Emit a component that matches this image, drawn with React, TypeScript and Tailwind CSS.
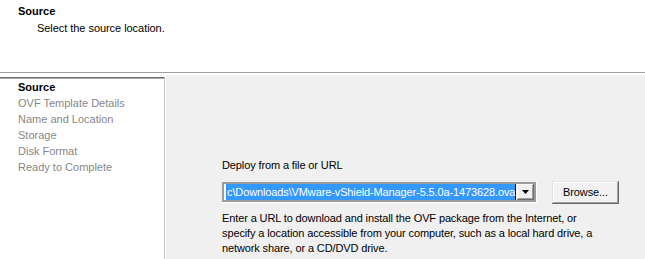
export default function App() {
  const steps = ["OVF Template Details", "Name and Location", "Storage", "Disk Format", "Ready to Complete"]

  return (
    <div className="w-[645px] h-[259px] overflow-hidden flex flex-col bg-white text-[11px] text-black font-['Liberation_Sans',Arial,sans-serif]">
      {/* Header */}
      <div className="h-[72px] shrink-0 pl-[18px] pt-[5px] leading-[13px]">
        <div className="font-bold">Source</div>
        <div className="pl-[19px] pt-[4px] tracking-[-0.05px]">Select the source location.</div>
      </div>
      <div className="h-px shrink-0 bg-[#a0a0a0]" />

      {/* Body */}
      <div className="flex-1 flex pt-[2px] min-h-0">
        {/* Steps */}
        <div className="w-[166px] shrink-0 pt-[2px] pr-px flex flex-col">
          <div className="flex-1 border-t border-r border-t-[#6e6e6e] border-r-[#c4c4c4] shadow-[inset_0_1px_#a8a8a8] pt-[1px] pl-[18px] leading-[16px]">
            <div className="font-bold">Source</div>
            {steps.map((s) => (
              <div key={s} className="text-[#878787]">
                {s}
              </div>
            ))}
          </div>
        </div>

        {/* Content */}
        <div className="flex-1 bg-[#f0f0f0] pl-[56px] pt-[82px] tracking-[-0.12px]">
          <div className="leading-[16px]">Deploy from a file or URL</div>
          <div className="flex items-center mt-[8px] gap-[15px]">
            <div className="w-[315px] h-[21px] border-r border-b border-white">
              <div className="h-[20px] flex border-2 border-[#9c9c9c] bg-white">
                <div className="flex-1 flex items-center pl-[2px] pr-px py-px">
                  <span className="whitespace-nowrap bg-[#3399ff] text-white leading-[16px] pl-px border-r border-black">
                    c\Downloads\VMware-vShield-Manager-5.5.0a-1473628.ova
                  </span>
                </div>
                <div className="w-[17px] shrink-0 bg-[#f0f0f0] flex items-center justify-center shadow-[inset_-1px_-1px_#696969,inset_1px_1px_#ffffff,inset_-2px_-2px_#a0a0a0]">
                  <svg width="7" height="4" viewBox="0 0 7 4">
                    <path d="M0 0h7L3.5 4z" fill="#000" />
                  </svg>
                </div>
              </div>
            </div>
            <button className="w-[67px] h-[23px] bg-[#f2f2f2] text-black leading-none shadow-[inset_-1px_-1px_#696969,inset_1px_1px_#e3e3e3,inset_-2px_-2px_#a0a0a0,inset_2px_2px_#ffffff]">
              Browse...
            </button>
          </div>
          <div className="mt-[7px] leading-[15px] whitespace-nowrap">
            Enter a URL to download and install the OVF package from the Internet, or
            <br />
            specify a location accessible from your computer, such as a local hard drive, a
            <br />
            network share, or a CD/DVD drive.
          </div>
        </div>
      </div>
    </div>
  )
}
